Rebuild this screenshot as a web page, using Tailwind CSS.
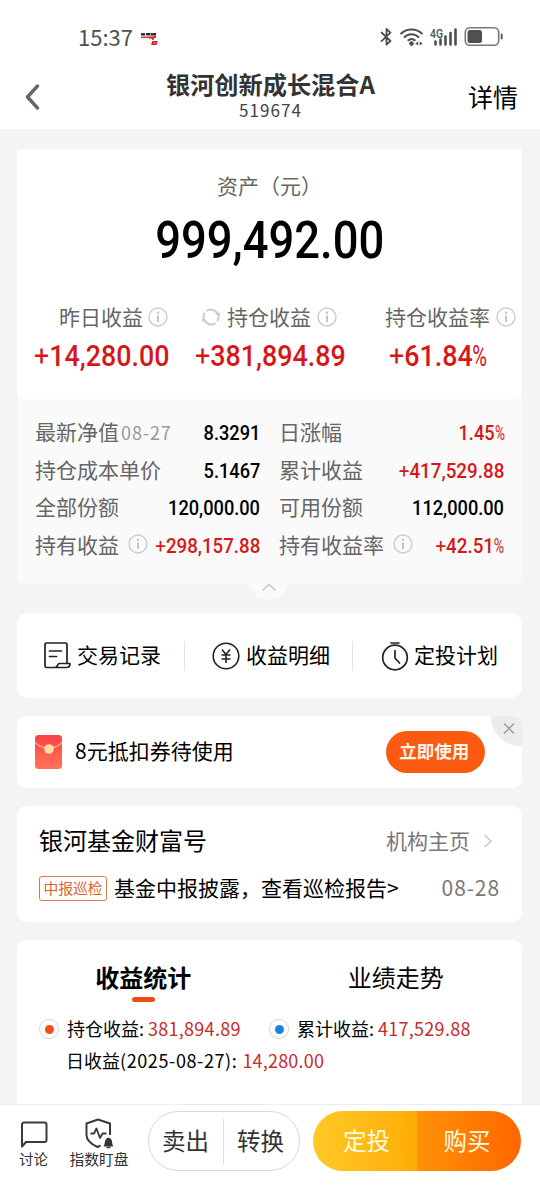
<!DOCTYPE html>
<html lang="zh-CN">
<head>
<meta charset="utf-8">
<title>银河创新成长混合A</title>
<script src="https://cdn.jsdelivr.net/npm/@tailwindcss/browser@4"></script>
</head>
<body class="w-[540px] h-[1200px] overflow-hidden bg-[#f4f4f4] font-['Noto_Sans_CJK_SC',sans-serif] text-black">
<svg class="hidden">
  <symbol id="info" viewBox="0 0 20 20"><circle cx="10" cy="10" r="9" fill="none" stroke="#ccc" stroke-width="1.4"/><circle cx="10" cy="5.8" r="1.2" fill="#c4c4c4"/><path d="M10 8.5V15" stroke="#c4c4c4" stroke-width="2"/></symbol>
</svg>
<div class="flex h-[1200px] flex-col">
  <header class="h-[129px] shrink-0 bg-white">
    <div class="flex h-[66px] items-center pt-[8px] pl-[78px] text-[22px] leading-none text-[#505050]">
      <span class="w-[62px] pb-[3px]">15:37</span>
      <svg class="mt-[4px]" width="18" height="14" viewBox="0 0 18 14"><path d="M1 2.300h4M6 2.300h4.500M11 2.300h5" stroke="#222" stroke-width="2.600"/><path d="M1.500 1.800h3M6.500 2.800h3M11.500 1.800h3" stroke="#888" stroke-width=".5"/><path d="M1 5.300h11" stroke="#c44" stroke-width="1.600"/><path d="M9 5.800l7-1M14.500 3.500l-2 4.500" stroke="#d22" stroke-width="1.800"/><path d="M12.500 9h5.200l-1.400 4H11z" fill="#d3182c"/><path d="M13.500 11.500l2-1" stroke="#fff" stroke-width=".8"/></svg>
      <svg class="ml-[222px]" width="125" height="22" viewBox="0 0 125 22" fill="none" stroke="#505050">
        <path d="M1.500 6.500l9 8.500-4 3.600V3l4 3.600-9 8.500" stroke-width="1.800" stroke-linejoin="round" stroke-linecap="round"/>
        <path d="M20.500 8.100c6-6.300 16-6.300 22 0M24 11.600c4.200-4.400 10.900-4.400 15 0M27.700 14.800c2.300-2.200 5.400-2.200 7.700 0" stroke-width="2"/><circle cx="31.500" cy="17.600" r="2.300" fill="#505050" stroke="none"/><path d="M35.200 17.500l3-2v4zM42.700 17.500l-3-2v4z" fill="#505050" stroke="none"/>
        <text x="50" y="11.500" font-size="12.500" font-weight="500" fill="#505050" stroke="none" font-family="Roboto" textLength="13" lengthAdjust="spacingAndGlyphs">4G</text>
        <path d="M55.500 15.500v3M60.500 13.500v5M65.500 10.500v8M70.500 7v11.500M75.500 3.500v15" stroke-width="2.600" stroke-linecap="round"/>
        <rect x="85.300" y="1.800" width="33.400" height="17.400" rx="4.500" stroke-width="1.600" stroke="#777"/><rect x="87.500" y="4" width="14.500" height="13" rx="2.500" fill="#505050" stroke="none"/><path d="M121.700 8.500v4" stroke-width="1.800" stroke-linecap="round"/>
      </svg>
    </div>
    <div class="flex h-[63px] items-start justify-between pl-[24px] pr-[22px]">
      <svg class="mt-[17px] w-[50px]" height="27" viewBox="0 0 50 27"><path d="M13.500 3L3.500 14l10 11" fill="none" stroke="#666" stroke-width="3.400" stroke-linecap="round" stroke-linejoin="round"/></svg>
      <div class="flex flex-col items-center">
        <h1 class="mt-[3px] -ml-px text-[24.200px] leading-[30px] font-bold text-[#333]">银河创新成长混合A</h1>
        <div class="mt-[1px] -ml-px text-[17px] leading-[20px] tracking-[1.1px] text-[#444]">519674</div>
      </div>
      <div class="mt-[15px] text-[25px] leading-[30px]">详情</div>
    </div>
  </header>

  <main class="flex h-[975px] shrink-0 flex-col overflow-hidden pr-[18px] pl-[17px] pt-[20px]">
    <section class="relative h-[436px] shrink-0 rounded-b-[8px] bg-[#fafafa]">
      <div class="h-[250px] rounded-b-[8px] bg-white pt-[22px]">
        <div class="text-center text-[21px] leading-[28px] text-[#666]">资产（元）</div>
        <div class="flex h-[60px] items-center justify-center pt-[22px] font-[Roboto] text-[51px] leading-none font-medium"><span class="inline-block scale-x-[.89]">999,492.00</span></div>
        <div class="mt-[43px] flex h-[30px] items-center pl-[42px] text-[21px] leading-none whitespace-nowrap text-[#666]">
          <span class="pb-[2px]">昨日收益</span><svg class="ml-[5px]" width="20" height="20"><use href="#info"/></svg>
          <svg class="ml-[33px]" width="20" height="20" viewBox="0 0 20 20" fill="none" stroke="#ccc" stroke-width="1.900"><path d="M5.500 3.900A7.500 7.500 0 0 1 17 8M14.500 16.100A7.500 7.500 0 0 1 3 12"/><path d="M2.500 11A7.500 7.500 0 0 1 3.800 5.700M17.500 9a7.500 7.500 0 0 1-1.300 5.300"/><path d="M14.500 6.500l5-1-1.300 4.500zM5.500 13.500l-5 1 1.300-4.500z" fill="#ccc" stroke="none"/></svg>
          <span class="ml-[6px] pb-[2px]">持仓收益</span><svg class="ml-[6px]" width="20" height="20"><use href="#info"/></svg>
          <span class="ml-[48px] pb-[2px]">持仓收益率</span><svg class="ml-[6px]" width="20" height="20"><use href="#info"/></svg>
        </div>
        <div class="mt-[6px] flex h-[36px] items-center font-[Roboto] text-[29px] leading-none font-medium whitespace-nowrap text-[#d71717]">
          <span class="ml-[17px] w-[161px]"><span class="inline-block origin-left scale-x-[.925]"><span class="font-normal">+</span>14,280.00</span></span>
          <span class="w-[194px]"><span class="inline-block origin-left scale-x-[.925]"><span class="font-normal">+</span>381,894.89</span></span>
          <span class="inline-block origin-left scale-x-[.925]"><span class="font-normal">+</span>61.84<span class="inline-block origin-left scale-x-[.75] font-normal">%</span></span>
        </div>
      </div>
      <div class="grid auto-rows-[37.500px] grid-cols-[225px_225px] gap-x-[19px] pt-[14px] pl-[18px] text-[21px] leading-[37.500px] whitespace-nowrap text-[#666]">
        <div class="flex h-[37.500px] justify-between"><span class="h-[37px]">最新净值<span class="ml-[2px] text-[18px] tracking-[.9px] text-[#999]">08-27</span></span><span class="inline-block origin-right scale-x-[.91] pt-[2px] font-[Roboto] text-[20px] font-medium text-black">8.3291</span></div>
        <div class="flex h-[37.500px] justify-between"><span>日涨幅</span><span class="inline-block origin-right scale-x-[.91] pt-[2px] font-[Roboto] text-[20px] font-medium text-[#d71717]">1.45<span class="-mr-[4px] inline-block origin-left scale-x-[.75] font-normal">%</span></span></div>
        <div class="flex h-[37.500px] justify-between"><span>持仓成本单价</span><span class="inline-block origin-right scale-x-[.91] pt-[2px] font-[Roboto] text-[20px] font-medium text-black">5.1467</span></div>
        <div class="flex h-[37.500px] justify-between"><span>累计收益</span><span class="inline-block origin-right scale-x-[.94] pt-[2px] font-[Roboto] text-[20px] font-medium text-[#d71717]"><span class="font-normal">+</span>417,529.88</span></div>
        <div class="flex h-[37.500px] justify-between"><span>全部份额</span><span class="inline-block origin-right scale-x-[.91] pt-[2px] font-[Roboto] text-[20px] font-medium text-black">120,000.00</span></div>
        <div class="flex h-[37.500px] justify-between"><span>可用份额</span><span class="inline-block origin-right scale-x-[.91] pt-[2px] font-[Roboto] text-[20px] font-medium text-black">112,000.00</span></div>
        <div class="flex h-[37.500px] justify-between"><span class="flex items-center gap-[9px]">持有收益<svg width="20" height="20"><use href="#info"/></svg></span><span class="-ml-4 inline-block origin-right scale-x-[.935] pt-[2px] font-[Roboto] text-[20px] font-medium text-[#d71717]"><span class="font-normal">+</span>298,157.88</span></div>
        <div class="flex h-[37.500px] justify-between"><span class="flex items-center gap-[9px]">持有收益率<svg width="20" height="20"><use href="#info"/></svg></span><span class="inline-block origin-right scale-x-[.94] pt-[2px] font-[Roboto] text-[20px] font-medium text-[#d71717]"><span class="font-normal">+</span>42.51<span class="-mr-[4px] inline-block origin-left scale-x-[.75] font-normal">%</span></span></div>
      </div>
      <svg class="absolute top-[436px] left-[233px]" width="38" height="15" viewBox="0 0 38 15"><path d="M0 0h38C35 9 29 15 19 15S3 9 0 0z" fill="#fafafa"/></svg>
      <svg class="absolute top-[434px] left-[244px]" width="16" height="9" viewBox="0 0 16 9"><path d="M1.500 7.500L8 1.500l6.500 6" fill="none" stroke="#c4c4c4" stroke-width="1.300"/></svg>
    </section>

    <section class="mt-[28px] flex h-[85px] shrink-0 items-center rounded-[11px] bg-white text-[21px] leading-none">
      <div class="flex h-[30px] w-[168px] items-center border-r border-[#e4e4e4] pl-[27px]">
        <svg class="-ml-px" width="28" height="28" viewBox="0 0 28 28" fill="none" stroke="#222" stroke-width="1.700" stroke-linejoin="round" stroke-linecap="round"><path d="M12 25.500H3.500A1.500 1.500 0 0 1 2 24V2.500a1.500 1.500 0 0 1 1.500-1.500H22.500a1.500 1.500 0 0 1 1.500 1.500v19M12 25.500c3 0 2-4 4.500-4H27c0 2.500-1.500 4-3.500 4zM6.500 9h12M6.500 14.500h7"/></svg>
        <span class="ml-[6px] pb-[2px]">交易记录</span>
      </div>
      <div class="flex h-[30px] w-[168px] items-center border-r border-[#e4e4e4] pl-[27px]">
        <svg width="28" height="28" viewBox="0 0 28 28" fill="none" stroke="#222" stroke-width="1.600"><circle cx="14" cy="14" r="12.800"/><path d="M10 7.500l4 5 4-5M9.500 13h9M9.500 17h9M14 12.500v8.500"/></svg>
        <span class="ml-[6px] pb-[2px]">收益明细</span>
      </div>
      <div class="flex h-[30px] items-center pl-[28px]">
        <svg width="28" height="30" viewBox="0 0 28 30" fill="none" stroke="#222" stroke-width="1.700" stroke-linecap="round"><circle cx="14" cy="16.500" r="12.300"/><path d="M10 2h8M14 9.500V17l4.500 5"/></svg>
        <span class="ml-[5px] pb-[2px]">定投计划</span>
      </div>
    </section>

    <section class="relative mt-[18px] flex h-[72px] shrink-0 items-center overflow-hidden rounded-[9px] bg-white pl-[18px] text-[21px] leading-none">
      <svg width="28" height="34" viewBox="0 0 28 34"><defs><linearGradient id="red" x2="0" y2="1"><stop stop-color="#fd4148"/><stop offset="1" stop-color="#ff7659"/></linearGradient></defs><rect width="27" height="34" y="0" rx="3.500" fill="url(#red)"/><path d="M0 7.500c7 7.500 20 7.500 27 0" fill="none" stroke="#ffac85" stroke-width="1.200"/><circle cx="14" cy="14" r="4.800" fill="#ffe0a3"/></svg>
      <span class="ml-[12px] pb-[3px]">8元抵扣券待使用</span>
      <div class="ml-[152px] flex h-[42px] w-[99px] items-center justify-center rounded-full bg-[#fb5a13] pr-[2px] pb-[2px] text-[17.500px] font-bold text-[#fff5e6]">立即使用</div>
      <svg class="absolute top-0 right-0" width="31" height="30" viewBox="0 0 31 30"><path d="M0 0h31v30C13 30 0 18 0 0z" fill="#ececec"/><path d="M13 7.500l10 10M23 7.500l-10 10" stroke="#999" stroke-width="1.300"/></svg>
    </section>

    <section class="mt-[18px] h-[116px] shrink-0 rounded-[9px] bg-white pr-[22px] pl-[22px] leading-none">
      <div class="flex h-[68px] items-center justify-between pr-[7px]"><span class="text-[24px]">银河基金财富号</span><span class="flex items-center text-[21px] text-[#777]">机构主页<svg class="mt-[2px] ml-[13px]" width="10" height="16" viewBox="0 0 10 16"><path d="M1.500 2l6.500 6-6.500 6" fill="none" stroke="#c8c8c8" stroke-width="1.500"/></svg></span></div>
      <div class="flex h-[28px] items-center text-[21px] whitespace-nowrap"><span class="flex h-[25px] w-[68px] items-center justify-center rounded-[3px] border border-[#d97950] text-[14.800px] text-[#e0622d]">中报巡检</span><span class="ml-[7px] pb-[2px]">基金中报披露，查看巡检报告&gt;</span><span class="ml-auto pb-[1px] tracking-[.9px] text-[#777]">08-28</span></div>
    </section>

    <section class="mt-[18px] h-[190px] shrink-0 rounded-t-[9px] bg-white">
      <div class="grid h-[75px] grid-cols-2 text-center text-[24px] leading-[36px]">
        <div class="flex flex-col items-center pt-[19px] font-bold">收益统计<span class="mt-[2px] h-[5px] w-[23px] rounded-full bg-[#e94e12]"></span></div>
        <div class="pt-[19px]">业绩走势</div>
      </div>
      <div class="flex h-[28px] items-center pl-[22px] text-[18px] leading-none whitespace-nowrap">
        <span class="flex size-[20px] items-center justify-center rounded-full border border-[#d4d4d4]"><i class="size-[9px] rounded-full bg-[#f04e10]"></i></span>
        <span class="ml-[8px] w-[202px] pb-[2px]">持仓收益: <span class="tracking-[.27px] text-[#c92a2a]">381,894.89</span></span>
        <span class="flex size-[20px] items-center justify-center rounded-full border border-[#d4d4d4]"><i class="size-[9px] rounded-full bg-[#1484ec]"></i></span>
        <span class="ml-[8px] pb-[2px]">累计收益: <span class="tracking-[.27px] text-[#c92a2a]">417,529.88</span></span>
      </div>
      <div class="mt-[3px] flex h-[28px] items-center gap-[5px] pl-[49px] text-[18px] leading-none"><span>日收益<span class="tracking-[.6px]">(2025-08-27):</span></span><span class="tracking-[.2px] text-[#c92a2a]">14,280.00</span></div>
    </section>
  </main>

  <footer class="flex h-[96px] shrink-0 items-start border-t border-[#ededed] bg-white text-[#333]">
    <div class="ml-[17px] flex w-[33px] flex-col items-center pt-[16px] text-[14.500px] leading-[20px]">
      <svg width="28" height="28" viewBox="0 0 28 28"><path d="M2 25.500V3.500a2 2 0 0 1 2-2h20.500a2 2 0 0 1 2 2V19a2 2 0 0 1-2 2H6z" fill="none" stroke="#3a3a3a" stroke-width="2" stroke-linejoin="round"/></svg><span>讨论</span>
    </div>
    <div class="ml-[18px] flex w-[62px] flex-col items-center pt-[13px] text-[14.800px] leading-[20px] whitespace-nowrap">
      <svg width="30" height="31" viewBox="0 0 30 31" fill="none" stroke="#3a3a3a" stroke-width="2" stroke-linejoin="round"><path d="M26 17V5.500L14 1.500 2.500 5.500V17c0 5 4.500 9 11 12l3-1.500"/><path d="M6.500 15.500H10l2.500-5 3.500 9.500 2.500-4.500h4" stroke-width="1.800"/><path d="M19.500 28.500c1.500-1 1-6 2.500-7.500 1-.900 1.800-1.200 2.500-1.200s1.500.3 2.500 1.200c1.500 1.500 1 6.500 2.500 7.500zM23 30h3" fill="#333" stroke="none"/><path d="M22.500 29.500h4" stroke-width="1.500"/></svg><span>指数盯盘</span>
    </div>
    <div class="mt-[6px] ml-[18px] flex h-[60px] w-[152px] items-center rounded-full border border-[#d8d8d8] text-[23.500px] leading-none">
      <span class="flex h-[45px] w-[75px] items-center justify-end border-r border-[#ddd] pr-[14px] pb-[1px]">卖出</span><span class="ml-[13px] pb-[1px]">转换</span>
    </div>
    <div class="mt-[6px] ml-[13px] flex h-[60px] w-[208px] overflow-hidden rounded-full text-[23.500px] leading-none text-[#fffbe0]">
      <span class="flex w-[104px] items-center justify-center bg-linear-to-r from-[#ffc925] to-[#ffac05] pr-0 pb-[1px] pl-[3px]">定投</span><span class="flex w-[104px] items-center justify-center bg-linear-to-r from-[#ff9105] to-[#ff6500] pr-[4px] pb-[1px]">购买</span>
    </div>
  </footer>
</div>
</body>
</html>
